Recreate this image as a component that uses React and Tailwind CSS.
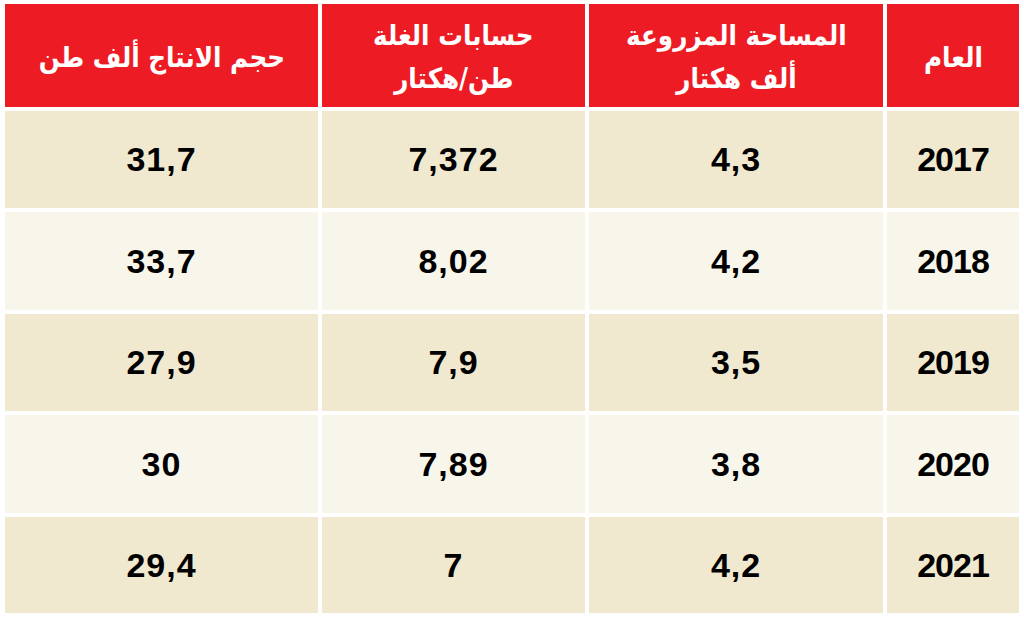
import React from "react";

const headers = [
  ["العام"],
  ["المساحة المزروعة", "ألف هكتار"],
  ["حسابات الغلة", "طن/هكتار"],
  ["حجم الانتاج ألف طن"],
];

const rows = [
  ["2017", "4,3", "7,372", "31,7"],
  ["2018", "4,2", "8,02", "33,7"],
  ["2019", "3,5", "7,9", "27,9"],
  ["2020", "3,8", "7,89", "30"],
  ["2021", "4,2", "7", "29,4"],
];

export default function App() {
  return (
    <div className="w-[1024px] h-[619px] bg-white pt-[4px] px-[5px] pb-[6px]">
      <div
        dir="rtl"
        className="grid grid-cols-[132px_294px_263px_313px] grid-rows-[103px_97px_98px_97px_98px_96px] gap-[4px]"
      >
        {headers.map((lines, i) => (
          <div
            key={i}
            className="bg-[#ed1c24] flex flex-col items-center justify-center pt-[3px] text-white font-bold text-[28px] leading-[43px] font-['DejaVu_Sans',sans-serif]"
          >
            {lines.map((l) => (
              <span key={l} className="block scale-x-[0.88]">
                {l}
              </span>
            ))}
          </div>
        ))}
        {rows.map((row, r) =>
          row.map((cell, c) => (
            <div
              key={r + "-" + c}
              className={
                "flex items-center justify-center text-black font-bold text-[34px] font-['Liberation_Sans',Arial,sans-serif] " +
                (r % 2 === 0 ? "bg-[#f1e9cf]" : "bg-[#f8f6eb]")
              }
            >
              <span
                dir="ltr"
                className={c === 0 ? "tracking-[-1px]" : "tracking-[1px]"}
              >
                {cell}
              </span>
            </div>
          ))
        )}
      </div>
    </div>
  );
}
